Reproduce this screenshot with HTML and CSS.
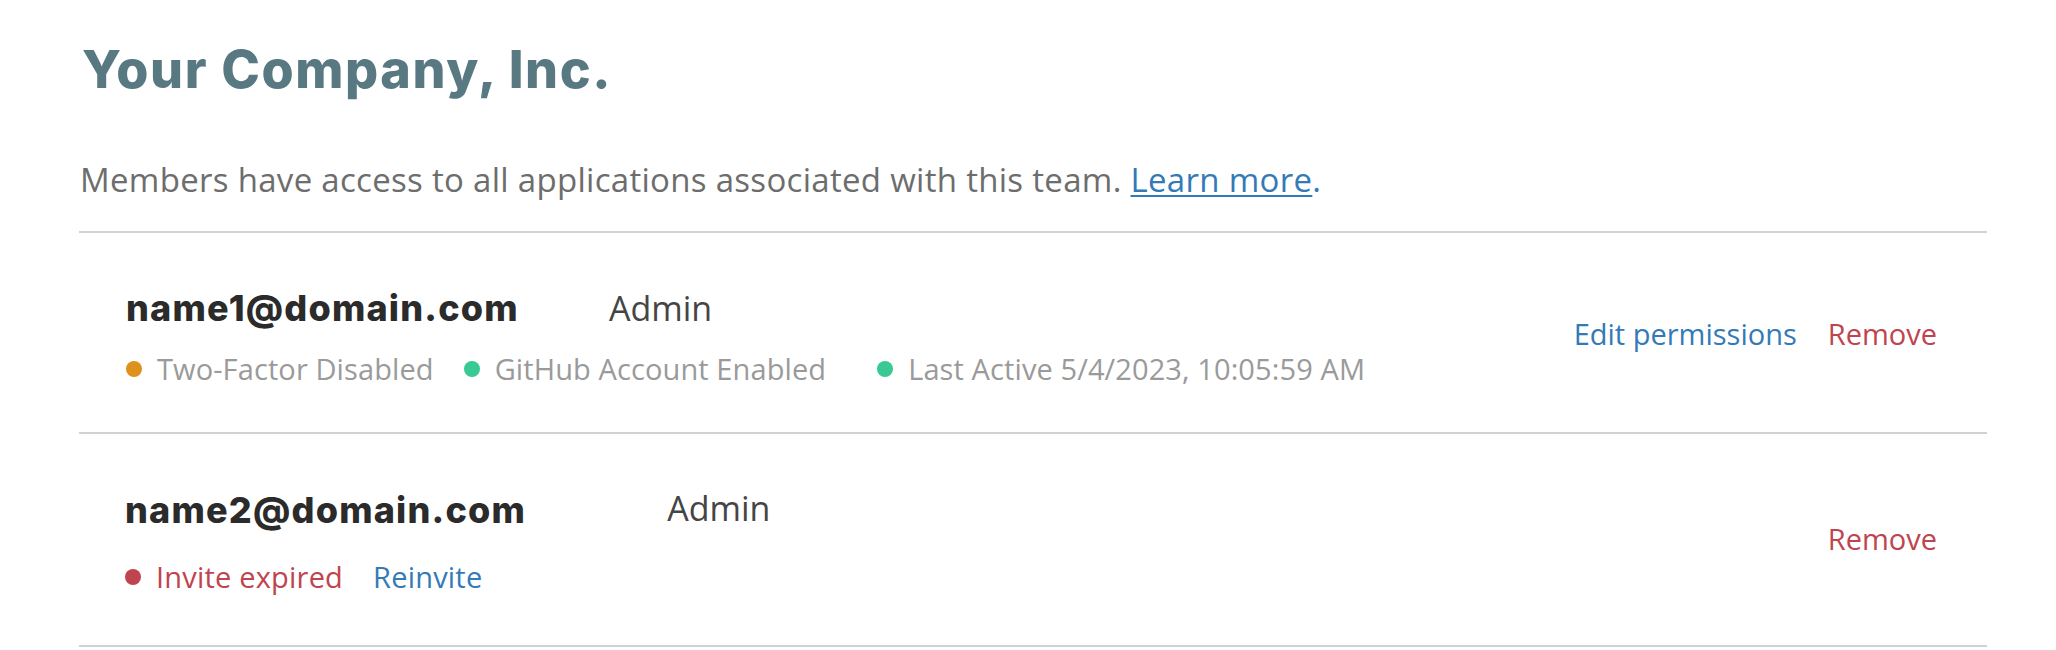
FILE: index.html
```html
<!DOCTYPE html>
<html lang="en">
<head>
<meta charset="utf-8">
<title>Team members</title>
<link rel="stylesheet" href="styles.css">
</head>
<body>
<main class="team">
  <h1 class="team-title">Your Company, Inc.</h1>
  <p class="team-intro">Members have access to all applications associated with this team. <a class="link" href="#">Learn more</a><span class="link-dot">.</span></p>
  <ul class="members">
    <li class="member">
      <div class="member-info">
        <div class="member-head">
          <span class="member-email">name1@domain.com</span>
          <span class="member-role">Admin</span>
        </div>
        <div class="member-status">
          <span class="status status--warn"><span class="dot"></span>Two-Factor Disabled</span>
          <span class="status status--ok status--github"><span class="dot"></span>GitHub Account Enabled</span>
          <span class="status status--ok"><span class="dot"></span>Last Active 5/4/2023, 10:05:59 AM</span>
        </div>
      </div>
      <div class="member-actions">
        <a class="action action--edit" href="#">Edit permissions</a>
        <a class="action action--remove" href="#">Remove</a>
      </div>
    </li>
    <li class="member member--invite">
      <div class="member-info">
        <div class="member-head">
          <span class="member-email">name2@domain.com</span>
          <span class="member-role">Admin</span>
        </div>
        <div class="member-status">
          <span class="status status--error"><span class="dot"></span>Invite expired</span>
          <a class="action action--edit reinvite" href="#">Reinvite</a>
        </div>
      </div>
      <div class="member-actions">
        <a class="action action--remove" href="#">Remove</a>
      </div>
    </li>
  </ul>
</main>
</body>
</html>
```

FILE: styles.css
```css
* { box-sizing: border-box; }

html, body {
  margin: 0;
  padding: 0;
  background: #ffffff;
}

body {
  font-family: "Open Sans", "Liberation Sans", sans-serif;
  color: #333;
}

.team {
  width: 1987px;
  padding: 38px 0 0 79px;
}

.team-title {
  margin: 0 0 0 3px;
  font-family: Inter, "Liberation Sans", sans-serif;
  font-weight: 800;
  font-size: 52px;
  line-height: 64px;
  letter-spacing: 1.6px;
  color: #587981;
}

.team-intro {
  margin: 56px 0 29px 1px;
  font-size: 33px;
  line-height: 44px;
  letter-spacing: 0.3px;
  color: #6d6d6d;
}

.link {
  color: #337ab7;
  text-decoration: underline;
  text-decoration-thickness: 2px;
  text-underline-offset: 3px;
}

.link-dot { color: #337ab7; }

.members {
  list-style: none;
  margin: 0;
  padding: 0;
  border-top: 2px solid #d2d2d2;
}

.member {
  display: flex;
  align-items: center;
  justify-content: space-between;
  padding: 51px 50px 43px 47px;
  border-bottom: 2px solid #d2d2d2;
}

.member--invite {
  padding: 52px 50px 48px 46px;
}

.member-head {
  display: flex;
  align-items: baseline;
  height: 48px;
  line-height: 48px;
}

.member-email {
  font-family: Inter, "Liberation Sans", sans-serif;
  font-weight: 800;
  font-size: 36px;
  letter-spacing: 1.2px;
  color: #2b2b2b;
}

.member-role {
  margin-left: 90px;
  font-size: 34px;
  color: #454545;
}

.member--invite .member-role {
  margin-left: 141px;
  position: relative;
  top: -2px;
}

.member-status {
  display: flex;
  align-items: center;
  margin-top: 17px;
  height: 40px;
  line-height: 40px;
  font-size: 29px;
  letter-spacing: 0.1px;
}

.member--invite .member-status {
  margin-top: 23px;
  letter-spacing: 0.2px;
}

.status {
  display: flex;
  align-items: center;
  color: #9a9a9a;
}

.status + .status { margin-left: 30px; }

.status--github { margin-right: 21px; }

.dot {
  width: 16px;
  height: 16px;
  border-radius: 50%;
  margin-right: 15px;
  flex: none;
}

.status--warn .dot { background: #de911b; }
.status--ok .dot { background: #38c994; }
.status--error { color: #c0444f; }
.status--error .dot { background: #c0444f; }

.reinvite { margin-left: 30px; }

.member-actions {
  display: flex;
  align-items: center;
  gap: 31px;
  margin-bottom: 6px;
  font-size: 29px;
  line-height: 40px;
}

.action {
  font-size: 29px;
  text-decoration: none;
}

.action--edit { color: #337ab7; }
.action--remove { color: #c0444f; }
```
